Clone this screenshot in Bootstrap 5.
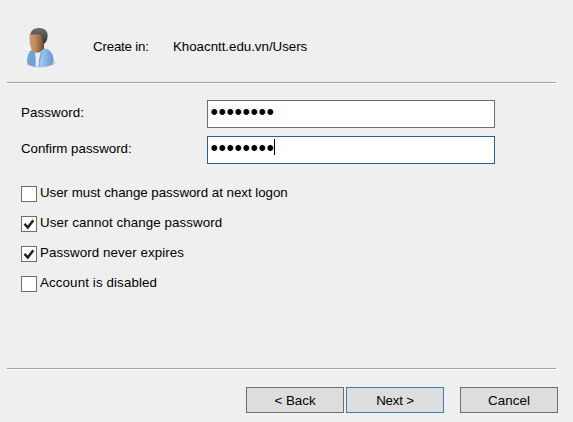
<!DOCTYPE html>
<html lang="en">
<head>
<meta charset="utf-8">
<meta name="viewport" content="width=device-width, initial-scale=1">
<title>New Object - User</title>
<link href="https://cdn.jsdelivr.net/npm/bootstrap@5.3.0/dist/css/bootstrap.min.css" rel="stylesheet">
<style>
body{background:#efefef;color:#000;font:13.33px/18px "Liberation Sans",Arial,sans-serif;letter-spacing:-.03px;overflow:hidden}
.dialog{width:573px;height:422px;padding:0 15px 9px 7px}
.head{height:82px;padding:25px 0 0 16px}
.portrait{width:36px;height:46px;margin-right:34px}
.head-text{margin-top:13px}
.head-label{width:80px}
.rule{height:2px;width:549px;background:#fff;border-top:1px solid #a0a0a0}
.fields{padding:16px 0 0 14px;gap:8px}
.field-label{width:186px}
.secret{width:288px;height:28px;padding:0 2px 0 3px;background:#fff;border:1px solid #6e6e6e}
.secret.active{border-color:#2b608e}
.dots{font-size:21.5px;line-height:22px;letter-spacing:.47px;margin-left:-.5px}
.caret{width:1px;height:16px;margin-top:2px;background:#000}
.options{padding:22px 0 0 14px;gap:14px}
.option{height:16px;gap:3px}
.tick{width:16px;height:16px;background:#fff;border:1px solid #6e6e6e}
.tick svg{display:block}
.option label{margin-top:-2px}
.push{width:98px;height:26px;padding:1px 0 0;font-size:13.33px;line-height:23px;color:#000;background:#ddd;border:1px solid #6e6e6e;border-radius:0}
.push.primary{border-color:#3c7fb1}
.actions{padding-top:17px;width:551px}
.actions .pair{gap:2px}
.tight{letter-spacing:-.2px}
.loose{letter-spacing:.08px}
.looser{letter-spacing:.12px}
</style>
</head>
<body>
<main class="dialog d-flex flex-column">
  <header class="head d-flex">
    <svg class="portrait" viewBox="0 0 36 46">
      <defs>
        <linearGradient id="skin"><stop offset="0" stop-color="#c99a76"/><stop offset=".35" stop-color="#c28a5e"/><stop offset=".75" stop-color="#91603d"/><stop offset="1" stop-color="#5e3b26"/></linearGradient>
        <linearGradient id="shirt"><stop offset="0" stop-color="#79a9d8"/><stop offset=".55" stop-color="#9cc8f0"/><stop offset="1" stop-color="#6397c8"/></linearGradient>
        <linearGradient id="hair" x2="0" y2="1"><stop offset="0" stop-color="#6d7072"/><stop offset="1" stop-color="#333133"/></linearGradient>
      </defs>
      <ellipse cx="19" cy="37.500" rx="13.500" ry="4" fill="#cdcdcb"/>
      <path d="M10 20h11v8l-6 3-5-4z" fill="#65402a"/>
      <path d="M4.500 39c-.5-8 .5-12 5.500-15l6 3.500 5-4c6 .5 9 5 9.500 11l-1 5c-6 3.500-18 4-25 0z" fill="url(#shirt)"/>
      <path d="M11 26l3 1 3 .5-1 14-4-.2-2-9z" fill="#e9ebf7"/>
      <path d="M4.500 38.500c-.5-7 1-12 6-15 2 5 2.500 10 2 18-3-.2-6-1-8-3z" fill="#6ea3d3"/>
      <path d="M16 41.500c0-6 1-11 4-15" fill="none" stroke="#588dbd" stroke-width=".7"/>
      <path d="M6.500 12c0-5 4-6 8-6 5.500 0 8 3 7.500 8-.5 7-3.500 13.500-9 14-5-1-6.500-8-6.500-16z" fill="url(#skin)"/>
      <path d="M7.500 9.500c.5-4.500 4-6.500 8.500-6.500 6.500 0 9.500 4 8.500 9-.3 4-2 6-4 7 0-2-.4-3-1.300-4 .8-3-.2-5.300-3-5.800-3 .2-5.500.4-8.700.3z" fill="url(#hair)"/>
    </svg>
    <div class="head-label head-text tight">Create in:</div>
    <div class="head-text">Khoacntt.edu.vn/Users</div>
  </header>
  <div class="rule"></div>
  <section class="fields d-flex flex-column">
    <div class="d-flex"><div class="field-label pt-1 loose">Password:</div><div class="secret d-flex"><span class="dots">••••••••</span></div></div>
    <div class="d-flex"><div class="field-label pt-1">Confirm password:</div><div class="secret active d-flex"><span class="dots">••••••••</span><span class="caret"></span></div></div>
  </section>
  <section class="options d-flex flex-column">
    <div class="option d-flex"><span class="tick"></span><label>User must change password at next logon</label></div>
    <div class="option d-flex"><span class="tick"><svg width="14" height="14" viewBox="0 0 14 14"><path d="M2.500 6.800l3.300 3.700L11.300 3.300" fill="none" stroke="#222" stroke-width="2.500"/></svg></span><label class="loose">User cannot change password</label></div>
    <div class="option d-flex"><span class="tick"><svg width="14" height="14" viewBox="0 0 14 14"><path d="M2.500 6.800l3.300 3.700L11.300 3.300" fill="none" stroke="#222" stroke-width="2.500"/></svg></span><label class="loose">Password never expires</label></div>
    <div class="option d-flex"><span class="tick"></span><label class="looser">Account is disabled</label></div>
  </section>
  <div class="mt-auto rule"></div>
  <footer class="actions d-flex justify-content-end">
    <div class="pair d-flex">
      <button class="btn push">&lt; Back</button>
      <button class="btn push primary tight">Next &gt;</button>
    </div>
    <button class="btn push loose ms-3">Cancel</button>
  </footer>
</main>
<script src="https://cdn.jsdelivr.net/npm/bootstrap@5.3.0/dist/js/bootstrap.bundle.min.js"></script>
</body>
</html>
